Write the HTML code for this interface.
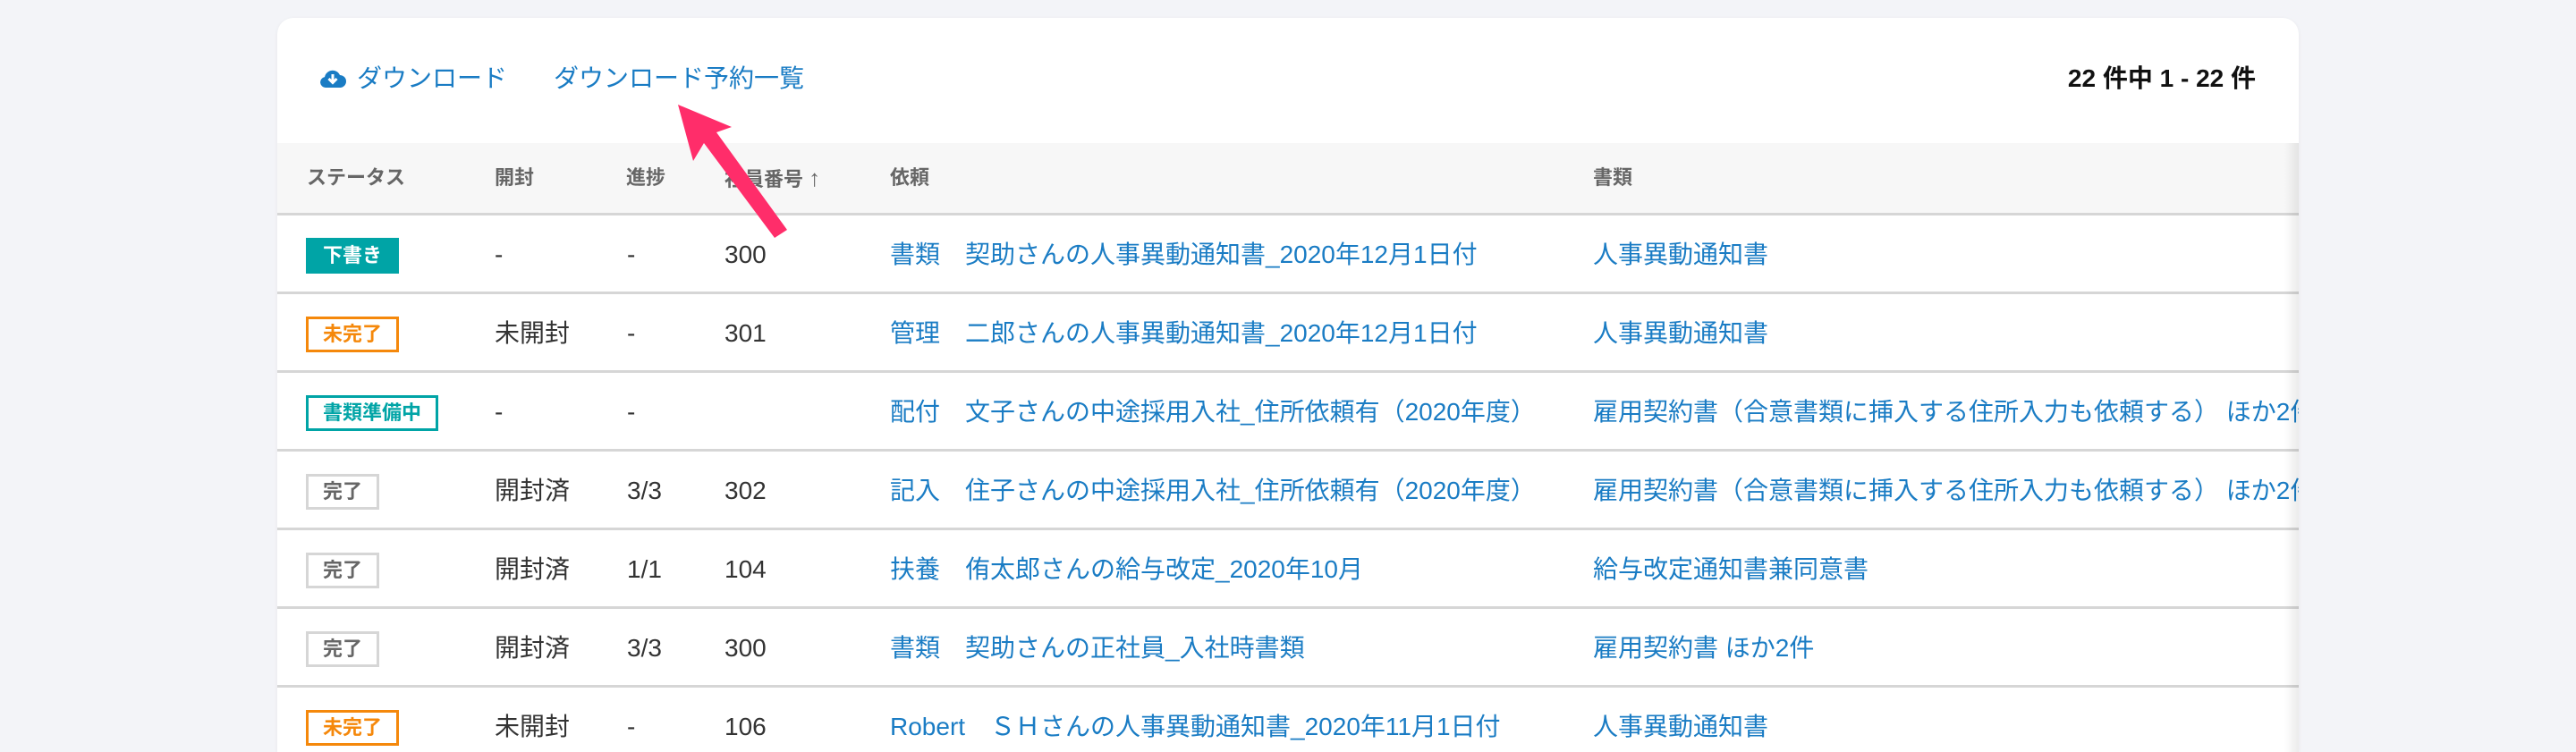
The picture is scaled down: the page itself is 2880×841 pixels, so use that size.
<!DOCTYPE html>
<html style="overflow:hidden;height:841px"><head><meta charset="utf-8"><style>
*{margin:0;padding:0;box-sizing:border-box}
body{width:2880px;height:841px;background:#f3f4f8;position:relative;overflow:hidden;font-family:"Liberation Sans","Noto Sans CJK JP",sans-serif}
.card{position:absolute;left:310px;top:20px;width:2260px;height:821px;background:#fff;border-radius:18px 18px 0 0;box-shadow:0 1px 4px rgba(0,0,0,.06);overflow:hidden}
.top{position:absolute;top:51px;font-size:28px;color:#1a7cc4;white-space:nowrap;line-height:34px}
.count{position:absolute;right:48px;top:51px;font-size:28px;color:#111;font-weight:bold;line-height:34px}
.head{position:absolute;left:0;top:140px;width:2260px;height:81px;background:#f7f7f7;border-bottom:3px solid #d6d6d6}
.row{position:absolute;left:0;width:2260px;height:88px;border-bottom:3px solid #d6d6d6}
.c{position:absolute;white-space:nowrap;font-size:28px;color:#333;line-height:34px}
.h{position:absolute;top:22px;font-size:22px;font-weight:bold;color:#666;line-height:34px;white-space:nowrap}
.l{color:#1a7cc4}
.b{position:absolute;left:32px;height:40px;font-size:22px;font-weight:bold;line-height:34px;padding:0 16px;border:3px solid;white-space:nowrap}
.shade{position:absolute;right:0;top:140px;width:16px;height:681px;background:linear-gradient(to right,rgba(0,0,0,0),rgba(0,0,0,.08))}
</style></head><body>
<div class="card">
<div class="top" style="left:47px"><svg width="30" height="22" viewBox="0 0 30 22" style="vertical-align:-2px;margin-right:12px"><path d="M7 21a6 6 0 0 1-1-11.9A9 9 0 0 1 23 7a7 7 0 0 1 0 14z" fill="#1a7cc4"/><path d="M15 6v9M10.5 11l4.5 4.5 4.5-4.5" stroke="#fff" stroke-width="3" fill="none"/></svg>ダウンロード</div>
<div class="top" style="left:309px">ダウンロード予約一覧</div>
<div class="count">22 件中 1 - 22 件</div>
<div class="head">
<div class="h" style="left:33px">ステータス</div>
<div class="h" style="left:243px">開封</div>
<div class="h" style="left:390px">進捗</div>
<div class="h" style="left:500px">社員番号 <span style="font-size:26px">↑</span></div>
<div class="h" style="left:685px">依頼</div>
<div class="h" style="left:1471px">書類</div>
</div>

<div class="row" style="top:221px">
<div class="b" style="top:25px;background:#00a4a6;border-color:#00a4a6;color:#fff">下書き</div>
<div class="c" style="left:243px;top:27px">-</div><div class="c" style="left:391px;top:27px">-</div><div class="c" style="left:500px;top:27px">300</div>
<div class="c l" style="left:685px;top:27px">書類　契助さんの人事異動通知書_2020年12月1日付</div>
<div class="c l" style="left:1471px;top:27px">人事異動通知書</div></div>

<div class="row" style="top:309px">
<div class="b" style="top:25px;border-color:#f5880b;color:#f5880b">未完了</div>
<div class="c" style="left:243px;top:27px">未開封</div><div class="c" style="left:391px;top:27px">-</div><div class="c" style="left:500px;top:27px">301</div>
<div class="c l" style="left:685px;top:27px">管理　二郎さんの人事異動通知書_2020年12月1日付</div>
<div class="c l" style="left:1471px;top:27px">人事異動通知書</div></div>

<div class="row" style="top:397px">
<div class="b" style="top:25px;border-color:#00a4a6;color:#00a4a6">書類準備中</div>
<div class="c" style="left:243px;top:27px">-</div><div class="c" style="left:391px;top:27px">-</div>
<div class="c l" style="left:685px;top:27px">配付　文子さんの中途採用入社_住所依頼有（2020年度）</div>
<div class="c l" style="left:1471px;top:27px">雇用契約書（合意書類に挿入する住所入力も依頼する） ほか2件</div></div>

<div class="row" style="top:485px">
<div class="b" style="top:25px;border-color:#d6d6d6;color:#666">完了</div>
<div class="c" style="left:243px;top:27px">開封済</div><div class="c" style="left:391px;top:27px">3/3</div><div class="c" style="left:500px;top:27px">302</div>
<div class="c l" style="left:685px;top:27px">記入　住子さんの中途採用入社_住所依頼有（2020年度）</div>
<div class="c l" style="left:1471px;top:27px">雇用契約書（合意書類に挿入する住所入力も依頼する） ほか2件</div></div>

<div class="row" style="top:573px">
<div class="b" style="top:25px;border-color:#d6d6d6;color:#666">完了</div>
<div class="c" style="left:243px;top:27px">開封済</div><div class="c" style="left:391px;top:27px">1/1</div><div class="c" style="left:500px;top:27px">104</div>
<div class="c l" style="left:685px;top:27px">扶養　侑太郎さんの給与改定_2020年10月</div>
<div class="c l" style="left:1471px;top:27px">給与改定通知書兼同意書</div></div>

<div class="row" style="top:661px">
<div class="b" style="top:25px;border-color:#d6d6d6;color:#666">完了</div>
<div class="c" style="left:243px;top:27px">開封済</div><div class="c" style="left:391px;top:27px">3/3</div><div class="c" style="left:500px;top:27px">300</div>
<div class="c l" style="left:685px;top:27px">書類　契助さんの正社員_入社時書類</div>
<div class="c l" style="left:1471px;top:27px">雇用契約書 ほか2件</div></div>

<div class="row" style="top:749px;height:72px;border-bottom:none">
<div class="b" style="top:25px;border-color:#f5880b;color:#f5880b">未完了</div>
<div class="c" style="left:243px;top:27px">未開封</div><div class="c" style="left:391px;top:27px">-</div><div class="c" style="left:500px;top:27px">106</div>
<div class="c l" style="left:685px;top:27px">Robert　ＳＨさんの人事異動通知書_2020年11月1日付</div>
<div class="c l" style="left:1471px;top:27px">人事異動通知書</div></div>
<div class="shade"></div>
</div>
<svg width="2880" height="841" style="position:absolute;left:0;top:0">
<path d="M880 257 L801 148 L818 142 L758 117 L775 180 L787 160 L866 266 Z" fill="#ff2d6a"/>
</svg>
</body></html>
